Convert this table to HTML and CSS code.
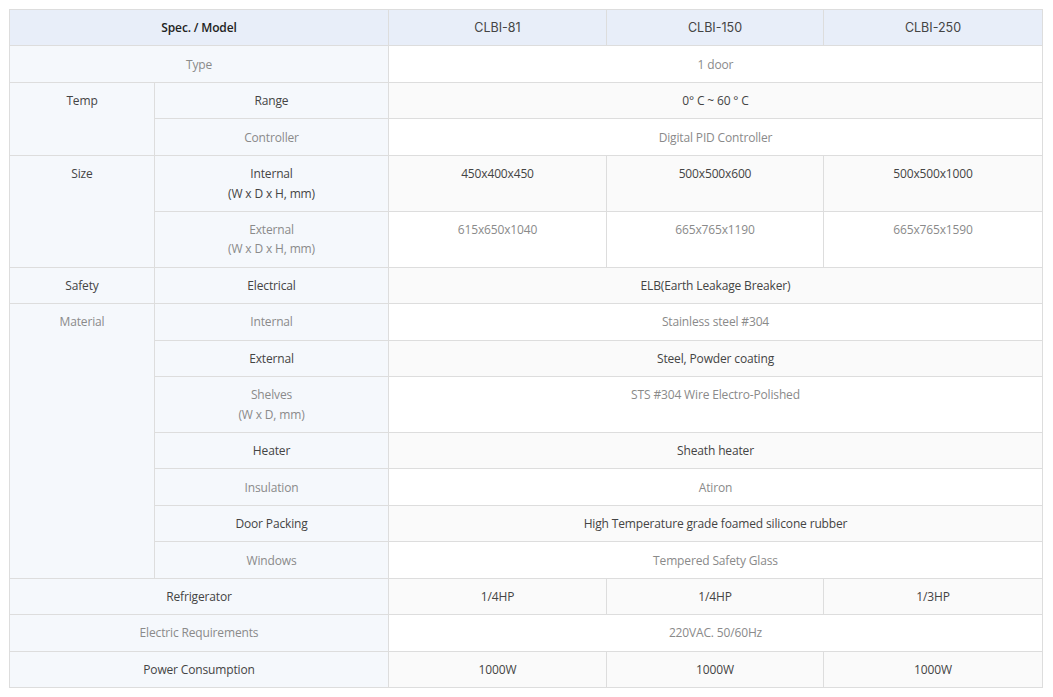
FILE: index.html
```html
<!DOCTYPE html>
<html>
<head>
<meta charset="utf-8">
<link rel="stylesheet" href="styles.css">
</head>
<body>
<table class="spec">
  <colgroup>
    <col class="c1"><col class="c2"><col class="c3"><col class="c4"><col class="c5">
  </colgroup>
  <thead>
    <tr>
      <th colspan="2" class="title">Spec. / Model</th>
      <th class="model">CLBI-81</th>
      <th class="model">CLBI-150</th>
      <th class="model">CLBI-250</th>
    </tr>
  </thead>
  <tbody>
    <tr class="odd"><th colspan="2">Type</th><td colspan="3">1 door</td></tr>
    <tr class="even"><th rowspan="2" class="grp">Temp</th><th>Range</th><td colspan="3">0° C ~ 60 ° C</td></tr>
    <tr class="odd"><th>Controller</th><td colspan="3">Digital PID Controller</td></tr>
    <tr class="even"><th rowspan="2" class="grp">Size</th><th>Internal<br>(W x D x H, mm)</th><td>450x400x450</td><td>500x500x600</td><td>500x500x1000</td></tr>
    <tr class="odd"><th>External<br>(W x D x H, mm)</th><td>615x650x1040</td><td>665x765x1190</td><td>665x765x1590</td></tr>
    <tr class="even"><th class="grp">Safety</th><th>Electrical</th><td colspan="3">ELB(Earth Leakage Breaker)</td></tr>
    <tr class="odd"><th rowspan="7" class="grp">Material</th><th>Internal</th><td colspan="3">Stainless steel #304</td></tr>
    <tr class="even"><th>External</th><td colspan="3">Steel, Powder coating</td></tr>
    <tr class="odd"><th>Shelves<br>(W x D, mm)</th><td colspan="3">STS #304 Wire Electro-Polished</td></tr>
    <tr class="even"><th>Heater</th><td colspan="3">Sheath heater</td></tr>
    <tr class="odd"><th>Insulation</th><td colspan="3">Atiron</td></tr>
    <tr class="even"><th>Door Packing</th><td colspan="3">High Temperature grade foamed silicone rubber</td></tr>
    <tr class="odd"><th>Windows</th><td colspan="3">Tempered Safety Glass</td></tr>
    <tr class="even"><th colspan="2">Refrigerator</th><td>1/4HP</td><td>1/4HP</td><td>1/3HP</td></tr>
    <tr class="odd"><th colspan="2">Electric Requirements</th><td colspan="3">220VAC. 50/60Hz</td></tr>
    <tr class="even"><th colspan="2">Power Consumption</th><td>1000W</td><td>1000W</td><td>1000W</td></tr>
  </tbody>
</table>
</body>
</html>
```
FILE: styles.css
```css
html, body {
  margin: 0;
  padding: 0;
  background: #ffffff;
}
body {
  padding: 9px;
  font-family: "Open Sans", "Liberation Sans", sans-serif;
  font-size: 12px;
  letter-spacing: -0.15px;
}
.spec {
  border-collapse: collapse;
  table-layout: fixed;
  width: 1033px;
}
.c1 { width: 145px; }
.c2 { width: 234px; }
.c3 { width: 218px; }
.c4 { width: 217px; }
.c5 { width: 219px; }
.spec th,
.spec td {
  border: 1px solid #dddddd;
  padding: 8.25px 10px 7.75px;
  line-height: 19.45px;
  text-align: center;
  vertical-align: top;
  font-weight: normal;
}
.spec tbody th {
  background: #f5f8fc;
}
.spec thead th {
  background: #e8eef9;
  color: #222222;
  padding-top: 7.75px;
  padding-bottom: 8.25px;
}
.spec thead th.title {
  font-weight: 600;
}
.spec thead th.model {
  font-family: "Inter", "Noto Sans", sans-serif;
  font-size: 12.5px;
  letter-spacing: 0;
  color: #444444;
}
.spec tr.odd td { background: #ffffff; }
.spec tr.even td { background: #fafafa; }
.spec tr.odd th, .spec tr.odd td { color: #8a8a8a; }
.spec tr.even th, .spec tr.even td { color: #444444; }
```
